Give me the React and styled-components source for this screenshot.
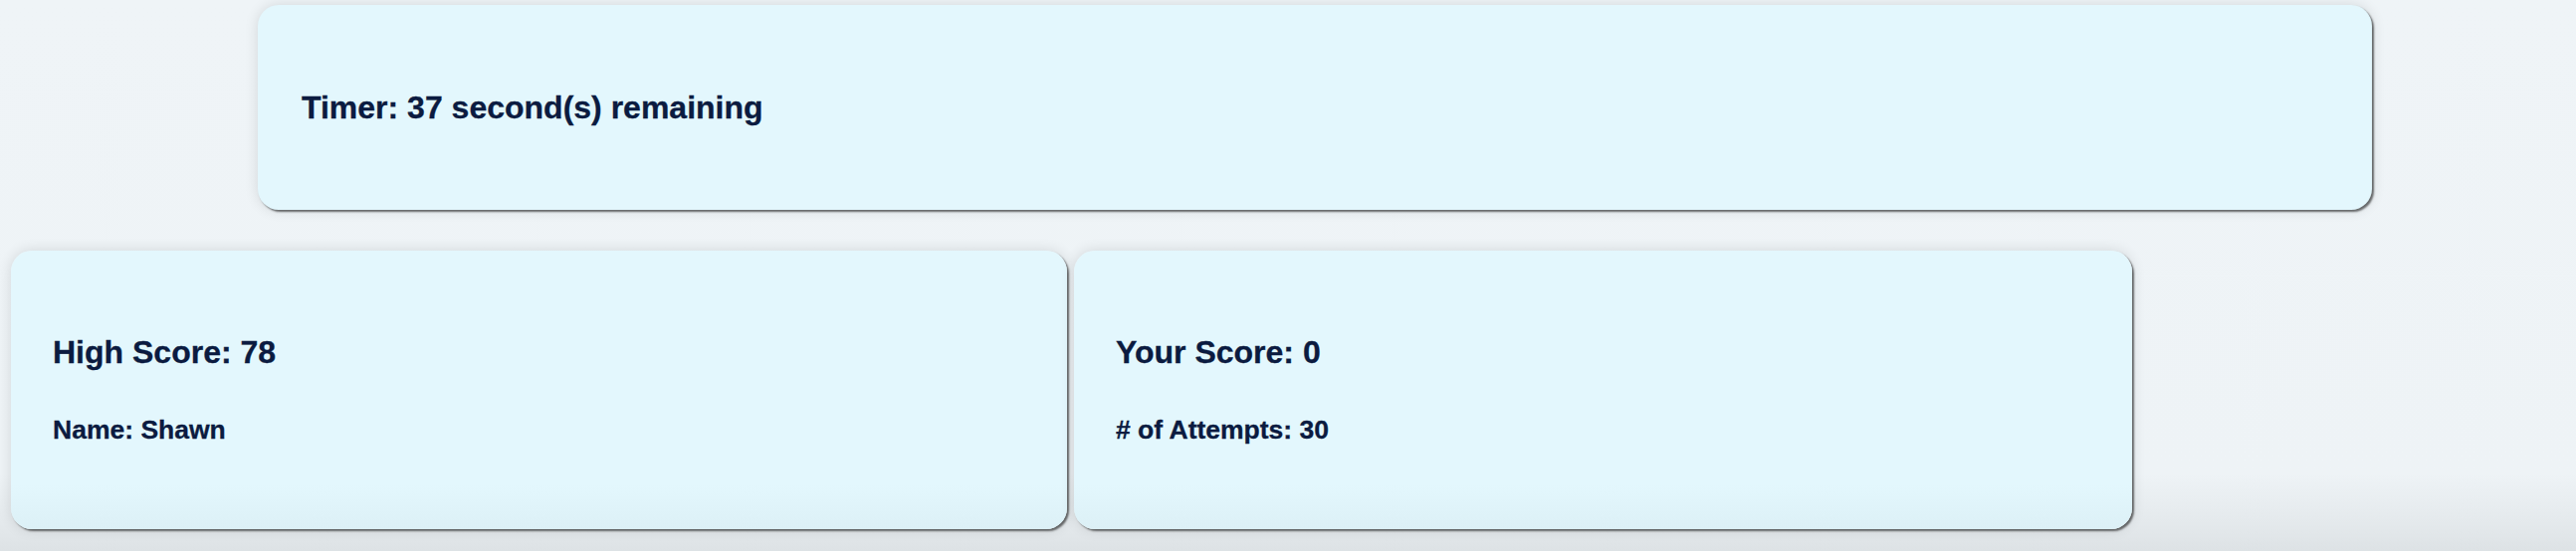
import styled, { createGlobalStyle } from "styled-components";

const GlobalStyle = createGlobalStyle`
  html, body {
    margin: 0;
    padding: 0;
  }
  body {
    min-height: 554px;
    font-family: "Liberation Sans", Arial, Helvetica, sans-serif;
    background: linear-gradient(
      to bottom,
      #eff4f7 0%,
      #eef3f6 86%,
      #e4e9ec 95%,
      #dde2e5 100%
    );
  }
`;

const Page = styled.div`
  display: flex;
  flex-direction: column;
  gap: 41px;
  padding-top: 5px;
`;

const Card = styled.div`
  box-sizing: border-box;
  background: #e3f7fd;
  border-radius: 21px;
  box-shadow: 2px 2px 2px rgba(0, 0, 0, 0.55), 0 0 14px rgba(0, 0, 0, 0.12);
  color: #0b1b40;
`;

const TimerCard = styled(Card)`
  margin-left: 259px;
  width: 2124px;
  height: 206px;
  padding-left: 44px;
  display: flex;
  align-items: center;
`;

const Row = styled.div`
  display: grid;
  grid-template-columns: 1061px 1063px;
  gap: 7px;
  margin-left: 11px;
`;

const ScoreCard = styled(Card)`
  height: 280px;
  padding-left: 42px;
  display: flex;
  flex-direction: column;
  justify-content: center;
  gap: 44px;
  background: linear-gradient(to bottom, #e3f7fd 0%, #e3f7fd 84%, #dcf0f6 100%);
`;

const Heading = styled.h2`
  margin: 0;
  font-size: 32px;
  font-weight: bold;
  line-height: normal;
  -webkit-text-stroke: 0.3px currentColor;
`;

const Detail = styled.p`
  margin: 0;
  font-size: 26.5px;
  font-weight: bold;
  line-height: normal;
  -webkit-text-stroke: 0.3px currentColor;
`;

const App = () => {
  const timeLeft = 37;
  const highScore = { score: 78, name: "Shawn" };
  const yourScore = { score: 0, attempts: 30 };

  return (
    <>
      <GlobalStyle />
      <Page>
        <TimerCard>
          <Heading>Timer: {timeLeft} second(s) remaining</Heading>
        </TimerCard>
        <Row>
          <ScoreCard>
            <Heading>High Score: {highScore.score}</Heading>
            <Detail>Name: {highScore.name}</Detail>
          </ScoreCard>
          <ScoreCard>
            <Heading>Your Score: {yourScore.score}</Heading>
            <Detail># of Attempts: {yourScore.attempts}</Detail>
          </ScoreCard>
        </Row>
      </Page>
    </>
  );
};

export default App;
